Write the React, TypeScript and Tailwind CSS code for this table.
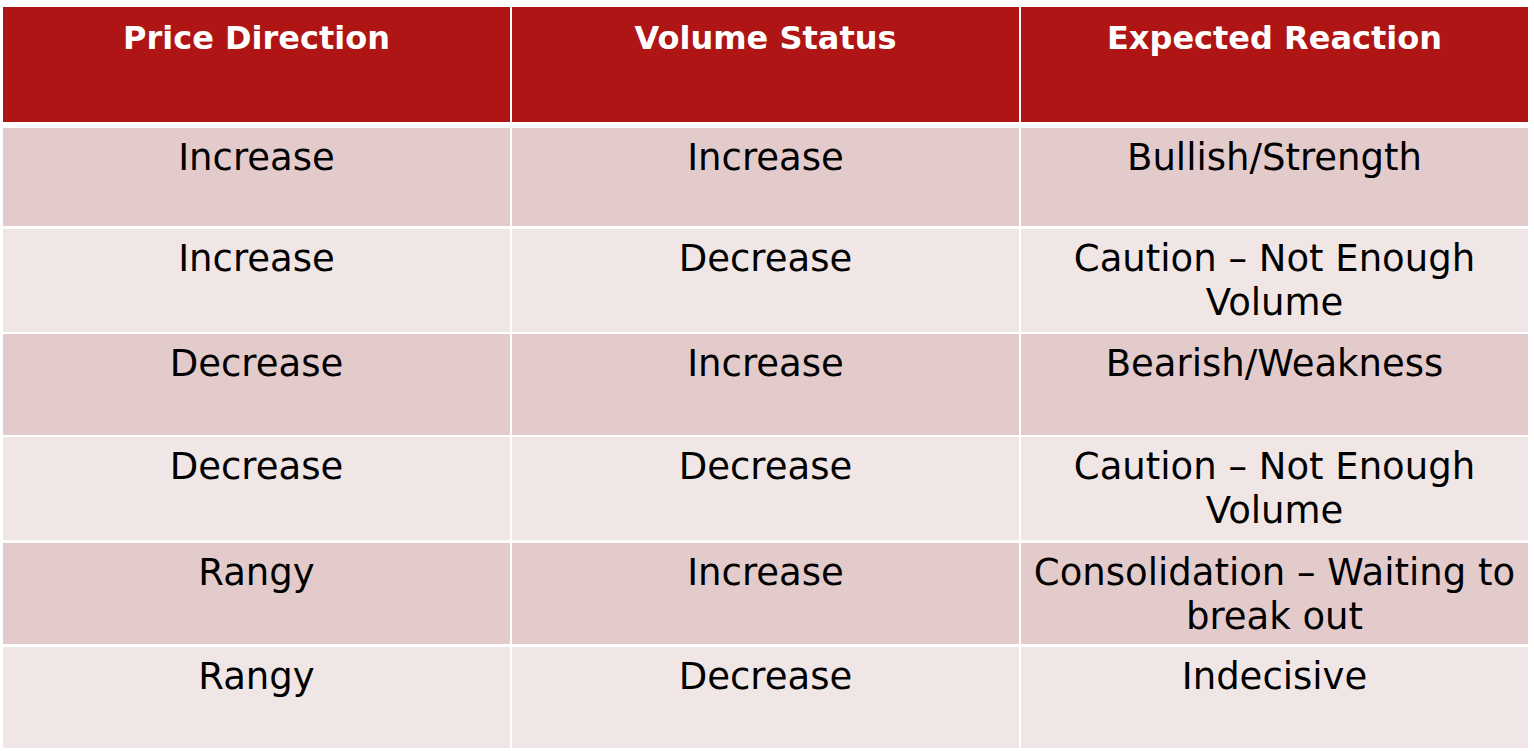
import React from "react";

const rows: { cells: string[]; h: string; mt: string; bg: string }[] = [
  { cells: ["Increase", "Increase", "Bullish/Strength"], h: "h-[98px]", mt: "mt-[6px]", bg: "bg-[#e4cbcb]" },
  { cells: ["Increase", "Decrease", "Caution – Not Enough Volume"], h: "h-[103px]", mt: "mt-[3px]", bg: "bg-[#f1e6e6]" },
  { cells: ["Decrease", "Increase", "Bearish/Weakness"], h: "h-[101px]", mt: "mt-[2px]", bg: "bg-[#e4cbcb]" },
  { cells: ["Decrease", "Decrease", "Caution – Not Enough Volume"], h: "h-[103px]", mt: "mt-[2px]", bg: "bg-[#f1e6e6]" },
  { cells: ["Rangy", "Increase", "Consolidation – Waiting to break out"], h: "h-[101px]", mt: "mt-[3px]", bg: "bg-[#e4cbcb]" },
  { cells: ["Rangy", "Decrease", "Indecisive"], h: "h-[101px]", mt: "mt-[3px]", bg: "bg-[#f1e6e6]" },
];

export default function App() {
  return (
    <div className="w-[1534px] h-[751px] bg-white overflow-hidden pt-[7px] pl-[3px] font-['DejaVu_Sans',sans-serif]">
      <div className="w-[1525px]">
        <div className="grid grid-cols-[507px_507px_507px] gap-x-[2px] h-[115px]">
          {["Price Direction", "Volume Status", "Expected Reaction"].map((t) => (
            <div key={t} className="bg-[#af1515] text-white font-bold text-[32px] leading-[40px] text-center pt-[11px]">
              {t}
            </div>
          ))}
        </div>
        {rows.map((r, i) => (
          <div key={i} className={`grid grid-cols-[507px_507px_507px] gap-x-[2px] ${r.h} ${r.mt}`}>
            {r.cells.map((c, j) => (
              <div key={j} className={`${r.bg} text-black text-[37px] leading-[44px] text-center pt-[8px] px-[2px]`}>
                {c}
              </div>
            ))}
          </div>
        ))}
      </div>
    </div>
  );
}
